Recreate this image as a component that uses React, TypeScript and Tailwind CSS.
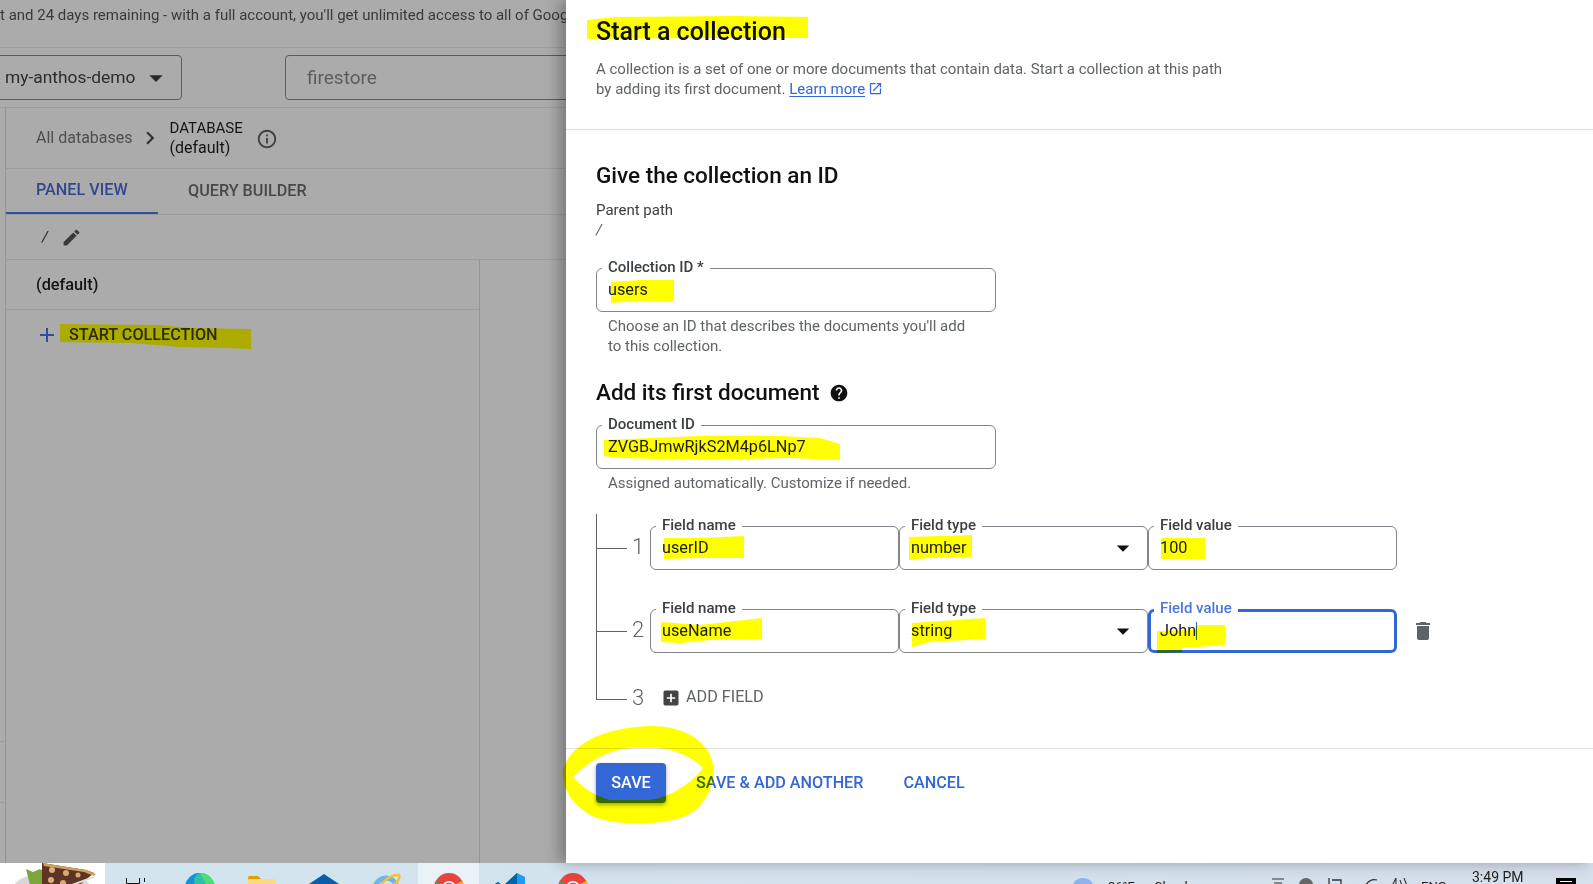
import React from 'react';
import {
  MdAdd,
  MdAddBox,
  MdArrowDropDown,
  MdChevronRight,
  MdDelete,
  MdEdit,
  MdHelp,
  MdInfoOutline,
  MdOpenInNew,
} from 'react-icons/md';

interface OutlinedFieldProps {
  label: string;
  value: React.ReactNode;
  className?: string;
  active?: boolean;
  dropdown?: boolean;
}

const OutlinedField: React.FC<OutlinedFieldProps> = ({ label, value, className = '', active = false, dropdown = false }) => (
  <div
    className={`relative flex h-[44px] items-center rounded-[6px] bg-white text-[16.25px] text-[#202124] ${
      active ? 'border-[3px] border-[#3367d6] pl-[9px]' : 'border border-[#80868b] pl-[11px]'
    } ${className}`}
  >
    <span
      className={`absolute bg-white px-[6px] text-[15px] leading-[20px] font-medium ${
        active ? 'left-[3px] top-[-14px] text-[#4a78dc]' : 'left-[5px] top-[-12px] text-[#3c4043]'
      }`}
    >
      {label}
    </span>
    {value}
    {dropdown && <MdArrowDropDown className="ml-auto mr-[9px] text-[#111]" size={30} />}
  </div>
);

const Helper: React.FC<{ children: React.ReactNode }> = ({ children }) => (
  <p className="pl-[12px] text-[15px] leading-[20px] text-[#5f6368]">{children}</p>
);

const ChromeIcon = () => (
  <svg viewBox="0 0 30 30" className="h-[30px] w-[30px]">
    <circle cx="15" cy="15" r="15" fill="#e8453c" />
    <path d="M15 15 L28 8 A15 15 0 0 1 15 30 Z" fill="#fbbc05" />
    <path d="M15 15 L15 30 A15 15 0 0 1 2 8 Z" fill="#34a853" />
    <circle cx="15" cy="15" r="7" fill="#fff" />
    <circle cx="15" cy="15" r="5.5" fill="#4285f4" />
  </svg>
);

const Taskbar = () => (
  <div className="flex h-[21px] items-start overflow-hidden bg-linear-to-r from-[#d1e5ef] to-[#d6dfec] font-['Roboto',sans-serif]">
    <div className="flex h-full w-[105px] shrink-0 justify-center overflow-hidden bg-white">
      <svg viewBox="0 0 86 30" className="h-[30px] w-[86px] shrink-0">
        <ellipse cx="42" cy="24" rx="38" ry="14" fill="#d8d8d8" />
        <path d="M16 6 L23 9 L30 6 L36 10 L36 24 L20 22 Z" fill="#7ea53b" />
        <path d="M32 0 L76 7 L84 10 L60 30 L32 30 Z" fill="#5e3524" />
        <path d="M33 0 L76 7 L86 11 L84 13 L74 9 L34 3 Z" fill="#cf9f5e" />
        <circle cx="42" cy="7" r="3" fill="#dcae7c" />
        <circle cx="56" cy="10" r="3" fill="#d9a877" />
        <circle cx="68" cy="12" r="2.5" fill="#d9a877" />
        <circle cx="41" cy="17" r="3" fill="#dcae7c" />
        <circle cx="53" cy="20" r="3" fill="#d9a877" />
        <path d="M62 22 L84 14" stroke="#e5e1dc" strokeWidth="2" />
      </svg>
    </div>
    <svg viewBox="0 0 20 10" className="ml-[21px] mt-[15px] h-[10px] w-[20px] shrink-0">
      <path d="M0.5 0 V5.5 H13.5 V0 M0 8.5 H14 M18.5 0 V4" fill="none" stroke="#111" strokeWidth="1" />
    </svg>
    <svg viewBox="0 0 30 30" className="ml-[39px] mt-[10px] h-[30px] w-[30px] shrink-0">
      <circle cx="15" cy="15" r="15" fill="#2fc0a8" />
      <path d="M0 15 A15 15 0 0 1 15 0 C8 3 7 9 12 14 L6 22 Z" fill="#1590dd" />
      <path d="M15 0 A15 15 0 0 1 30 15 L22 13 Z" fill="#50dd76" />
    </svg>
    <svg viewBox="0 0 28 24" className="ml-[33px] mt-[13px] h-[24px] w-[28px] shrink-0">
      <path d="M0 2 Q0 0 2 0 H10 L13 3 H13 V8 H0 Z" fill="#e0a100" />
      <rect x="0" y="3" width="28" height="21" rx="1" fill="#fbdc7d" />
    </svg>
    <svg viewBox="0 0 30 24" className="ml-[33px] mt-[11px] h-[24px] w-[30px] shrink-0">
      <path d="M15 0 L30 10 V24 H0 V10 Z" fill="#0a5ea8" />
    </svg>
    <svg viewBox="0 0 28 28" className="ml-[34px] mt-[10px] h-[28px] w-[28px] shrink-0">
      <circle cx="13" cy="16" r="11" fill="none" stroke="#6fb6e6" strokeWidth="5" />
      <path d="M2 22 C8 8 18 1 26 2 C28 6 22 12 16 15" fill="none" stroke="#f2c230" strokeWidth="2.5" />
    </svg>
    <div className="ml-[17px] flex h-full w-[61px] shrink-0 justify-center bg-[#e9f3f7] pt-[10px]">
      <div className="shrink-0">
        <ChromeIcon />
      </div>
    </div>
    <svg viewBox="0 0 30 30" className="ml-[16px] mt-[10px] h-[30px] w-[30px] shrink-0">
      <path d="M22 0 L30 4 V26 L22 30 L8 17 L3 21 L0 19 V11 L3 9 L8 13 Z" fill="#1f9cf0" />
      <path d="M22 0 L22 30 L8 17 L3 21 L0 19 V11 L3 9 L8 13 Z" fill="#0065a9" />
    </svg>
    <div className="ml-[33px] mt-[10px] shrink-0">
      <ChromeIcon />
    </div>
    <svg viewBox="0 0 20 12" className="ml-[485px] mt-[15px] h-[12px] w-[20px] shrink-0">
      <ellipse cx="10" cy="8" rx="10" ry="8" fill="#8fb3ee" />
    </svg>
    <span className="ml-[15px] mt-[16px] w-[46px] shrink-0 text-[13px] leading-[16px] text-[#222]">36°F</span>
    <span className="mt-[16px] w-[117px] shrink-0 text-[13px] leading-[16px] text-[#222]">Cloudy</span>
    <svg viewBox="0 0 14 8" className="mt-[15px] h-[8px] w-[14px] shrink-0">
      <path d="M1 1 H13 M3 5 H11" stroke="#333" strokeWidth="1.2" />
    </svg>
    <div className="ml-[14px] mt-[15px] h-[14px] w-[14px] shrink-0 rounded-full bg-[#666]" />
    <svg viewBox="0 0 14 8" className="ml-[15px] mt-[15px] h-[8px] w-[14px] shrink-0">
      <path d="M1 0 V6 M4 2 H13 V8" fill="none" stroke="#333" strokeWidth="1.3" />
    </svg>
    <svg viewBox="0 0 14 8" className="ml-[22px] mt-[15px] h-[8px] w-[14px] shrink-0">
      <path d="M1 8 Q6 0 13 2" fill="none" stroke="#333" strokeWidth="1.2" />
    </svg>
    <svg viewBox="0 0 16 8" className="ml-[13px] mt-[15px] h-[8px] w-[16px] shrink-0">
      <path d="M1 8 L5 0 V8 M9 2 L11 8 M13 0 L16 8" fill="none" stroke="#333" strokeWidth="1.1" />
    </svg>
    <span className="ml-[14px] mt-[16px] w-[51px] shrink-0 text-[13px] leading-[16px] text-[#222]">ENG</span>
    <span className="w-[84px] shrink-0 pt-[4px] text-[14px] leading-[20px] text-[#222]">3:49 PM</span>
    <div className="mt-[15px] flex h-[14px] w-[20px] shrink-0 justify-center bg-black pt-[3px]">
      <div className="h-[1px] w-[12px] bg-white" />
    </div>
  </div>
);

const LeftPanel = () => (
  <div className="flex w-[566px] shrink-0 flex-col overflow-hidden bg-[#ababab] font-['Roboto',sans-serif]">
    <div className="flex h-[48px] shrink-0 items-start overflow-hidden whitespace-nowrap border-b border-[#9c9c9c] pt-[5px] text-[15px] leading-[20px] text-[#3a3a3a]">
      t and 24 days remaining - with a full account, you'll get unlimited access to all of Google Cloud
    </div>
    <div className="flex h-[60px] shrink-0 items-start overflow-hidden border-b border-[#9c9c9c] pt-[7px]">
      <div className="-ml-[10px] flex h-[45px] w-[192px] shrink-0 items-center rounded-[4px] border border-[#5c5c5c] pl-[14px] text-[17.4px] text-[#2c2c2c]">
        my-anthos-demo
        <MdArrowDropDown className="ml-[4px] text-[#2a2a2a]" size={32} />
      </div>
      <div className="ml-[103px] flex h-[45px] w-[400px] shrink-0 items-center rounded-[4px] border border-[#5c5c5c] pl-[21px] pt-[1px] text-[19px] text-[#5c5c5c]">
        firestore
      </div>
    </div>
    <div className="flex min-h-0 flex-1">
      <div className="flex w-[5px] shrink-0 flex-col pt-[633px]">
        <div className="h-[62px] border-y border-[#9c9c9c]" />
      </div>
      <div className="flex min-w-0 flex-1 flex-col border-l border-[#949494]">
        <div className="flex h-[61px] shrink-0 items-center border-b border-[#9c9c9c] pl-[30px]">
          <span className="text-[16px] text-[#4e4e4e]">All databases</span>
          <MdChevronRight className="ml-[4px] text-[#333]" size={26} />
          <div className="-mt-[1px] ml-[7px] text-[15px] leading-[20px] text-[#141414]">
            <div>DATABASE</div>
            <div className="text-[16px]">(default)</div>
          </div>
          <MdInfoOutline className="ml-[13px] mt-[2px] text-[#404040]" size={22} />
        </div>
        <div className="flex h-[46px] shrink-0 border-b border-[#9c9c9c] text-[16.2px] font-medium">
          <div className="flex w-[152px] items-center border-b-2 border-[#2c4fa0] pl-[30px] text-[#33478f]">PANEL VIEW</div>
          <div className="ml-[30px] flex items-center text-[#484848]">QUERY BUILDER</div>
        </div>
        <div className="flex h-[45px] shrink-0 items-center border-b border-[#9c9c9c] pl-[36px] text-[15px] text-[#222]">
          <i>/</i>
          <MdEdit className="ml-[13px] text-[#3a3a3a]" size={21} />
        </div>
        <div className="flex min-h-0 flex-1">
          <div className="w-[474px] shrink-0 border-r border-[#949494]">
            <div className="flex h-[50px] items-center border-b border-[#9c9c9c] pl-[30px] pt-[1px] text-[16.3px] font-medium text-[#141414]">
              (default)
            </div>
            <div className="flex h-[50px] items-center pl-[30px] text-[16.2px] font-medium text-[#2c2c2c]">
              <MdAdd className="-ml-[1px] text-[#2c4fa0]" size={24} />
              <span className="ml-[10px]">START COLLECTION</span>
            </div>
          </div>
        </div>
      </div>
    </div>
  </div>
);

const FieldRow: React.FC<{ num: number; name: string; type: string; value: React.ReactNode; active?: boolean }> = ({
  num,
  name,
  type,
  value,
  active = false,
}) => (
  <div className="flex items-center">
    <div className="h-[1px] w-[31px] bg-[#5f6368]" />
    <span className="-mt-[3px] w-[23px] pl-[5px] text-[22px] font-light text-[#5f6368]">{num}</span>
    <OutlinedField label="Field name" value={name} className="w-[249px]" />
    <OutlinedField label="Field type" value={type} dropdown className="w-[249px]" />
    <OutlinedField label="Field value" value={value} active={active} className="w-[249px]" />
    {active && <MdDelete className="ml-[14px] text-[#5f6368]" size={24} />}
  </div>
);

const RightPanel = () => (
  <div className="relative flex min-w-0 flex-1 flex-col bg-white font-['Roboto',sans-serif] text-[#202124] shadow-[-6px_0_14px_rgba(0,0,0,0.3)]">
    <div className="h-[130px] shrink-0 border-b border-[#e0e0e0] pl-[30px] pt-[17px]">
      <h1 className="text-[25px] leading-[30px] font-medium text-[#111]">Start a collection</h1>
      <p className="mt-[12px] w-[636px] text-[15px] leading-[20px] text-[#5f6368]">
        A collection is a set of one or more documents that contain data. Start a collection at this path by adding its first
        document.{' '}
        <span className="text-[#3367d6] underline underline-offset-2">Learn more</span>
        <MdOpenInNew className="ml-[3px] inline-block align-[-2px] text-[#3367d6]" size={15} />
      </p>
    </div>
    <div className="min-h-0 flex-1 pl-[30px] pt-[31px]">
      <h2 className="text-[22.5px] leading-[28px] font-medium text-[#111]">Give the collection an ID</h2>
      <div className="mt-[11px] text-[15px] leading-[20px] text-[#3c4043]">Parent path</div>
      <div className="text-[15px] leading-[20px] text-[#5f6368]">
        <i>/</i>
      </div>
      <OutlinedField label="Collection ID *" value="users" className="mt-[28px] w-[400px]" />
      <div className="mt-[4px] w-[380px]">
        <Helper>Choose an ID that describes the documents you'll add to this collection.</Helper>
      </div>
      <h2 className="mt-[22px] flex items-center text-[22.5px] leading-[28px] font-medium text-[#111]">
        Add its first document
        <MdHelp className="ml-[10px] mt-[2px] text-[#111]" size={20} />
      </h2>
      <OutlinedField label="Document ID" value="ZVGBJmwRjkS2M4p6LNp7" className="mt-[19px] w-[400px]" />
      <div className="mt-[4px]">
        <Helper>Assigned automatically. Customize if needed.</Helper>
      </div>
      <div className="relative mt-[21px] flex h-[187px] flex-col">
        <div className="absolute left-0 top-0 h-[186px] w-[1px] bg-[#5f6368]" />
        <div className="mt-[12px]">
          <FieldRow num={1} name="userID" type="number" value="100" />
        </div>
        <div className="mt-[39px]">
          <FieldRow
            num={2}
            name="useName"
            type="string"
            active
            value={
              <>
                John
                <span className="h-[18px] w-[1px] bg-[#3367d6]" />
              </>
            }
          />
        </div>
        <div className="mt-[32px] flex h-[30px] items-center">
          <div className="h-[1px] w-[31px] bg-[#5f6368]" />
          <span className="-mt-[4px] w-[36px] pl-[5px] text-[22px] font-light text-[#5f6368]">3</span>
          <MdAddBox className="-ml-[2px] -mt-[4px] text-[#444]" size={20} />
          <span className="-mt-[4px] ml-[5px] text-[16.2px] text-[#5f6368]">ADD FIELD</span>
        </div>
      </div>
    </div>
    <div className="flex h-[115px] shrink-0 items-start border-t border-[#e0e0e0] pl-[30px] pt-[14px] text-[16.2px] font-medium text-[#3367d6]">
      <button className="h-[40px] w-[70px] rounded-[4px] bg-[#3367d6] text-white shadow-[0_2px_4px_rgba(0,0,0,0.35)]">SAVE</button>
      <span className="ml-[30px] mt-[8px]">SAVE &amp; ADD ANOTHER</span>
      <span className="ml-[40px] mt-[8px]">CANCEL</span>
    </div>
  </div>
);

// yellow marker strokes drawn over the screenshot
const MarkerOverlay = () => (
  <svg
    viewBox="0 0 1593 884"
    className="pointer-events-none absolute left-0 top-0 h-[884px] w-[1593px] mix-blend-multiply"
    fill="#ffff00"
  >
    <polygon points="60,324 160,325 190,328 251,329 251,349 225,348 180,347 130,343 60,342" />
    <polygon points="587,20 615,17 737,16 808,17 808,38 700,38 587,39" />
    <polygon points="611,282 640,280 674,280 674,302 640,301 611,303" />
    <polygon points="604,440 650,438 700,436 780,436 820,438 840,444 840,460 790,458 700,460 620,458 604,456" />
    <polygon points="664,538 700,538 744,536 744,558 700,558 664,559" />
    <polygon points="909,537 972,535 972,557 930,558 909,560" />
    <polygon points="1161,538 1205,538 1205,559 1161,559" />
    <polygon points="661,622 700,625 762,618 762,639 710,640 680,643 661,642" />
    <polygon points="912,623 985,618 985,639 930,642 912,647" />
    <polygon points="1157,631 1195,630 1197,625 1225,625 1225,645 1182,648 1182,652 1157,653" />
    <path
      fillRule="evenodd"
      d="M563 770 C570 745 600 728 650 726 C690 726 712 745 714 770 C714 790 700 812 683 817 C660 826 610 826 590 815 C575 805 563 795 563 770 Z M573 777 C590 760 610 747 645 747 C670 747 690 755 703 768 C690 785 670 797 650 800 L610 800 C596 796 585 790 573 777 Z"
    />
  </svg>
);

export default function App() {
  return (
    <div className="relative flex h-[884px] w-[1593px] flex-col overflow-hidden bg-white">
      <div className="flex h-[863px] shrink-0">
        <LeftPanel />
        <RightPanel />
      </div>
      <Taskbar />
      <MarkerOverlay />
    </div>
  );
}
